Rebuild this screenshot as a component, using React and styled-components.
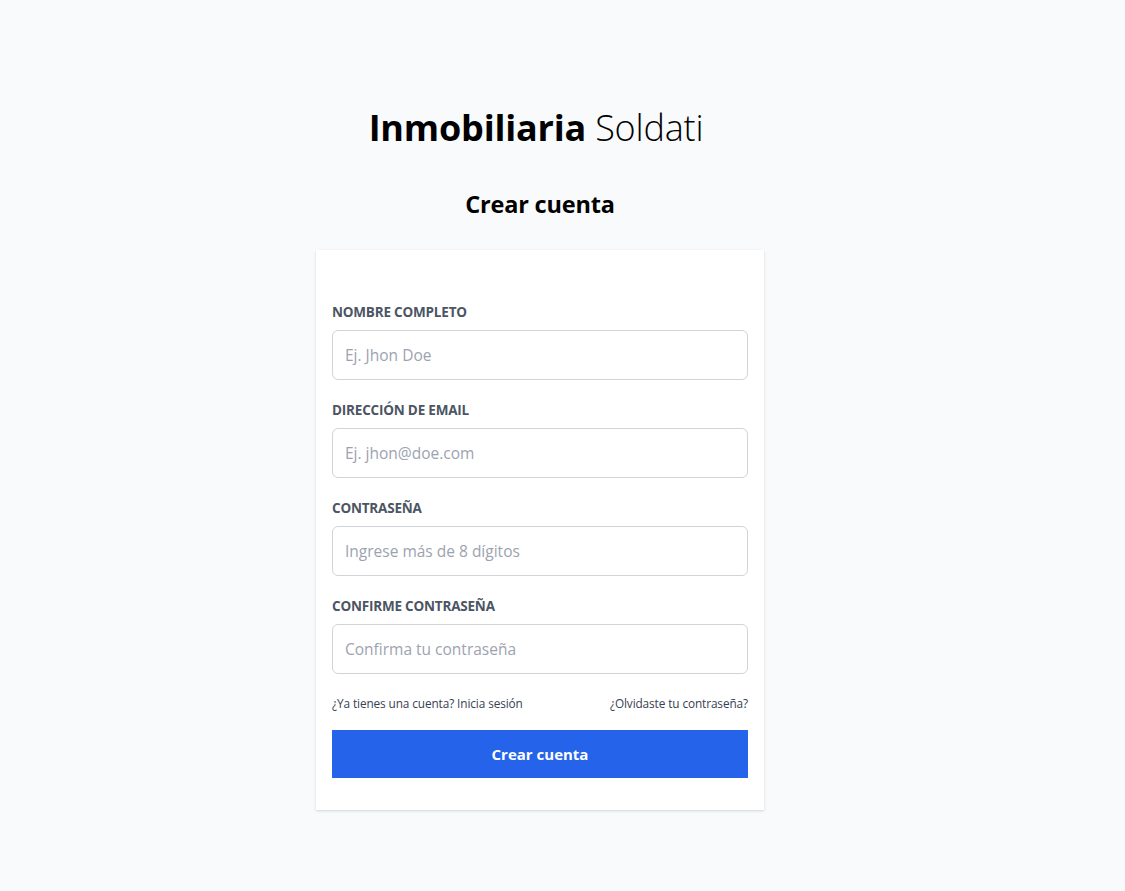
import React from 'react';
import styled, { createGlobalStyle } from 'styled-components';

const GlobalStyle = createGlobalStyle`
    body {
        margin: 0;
        background: #f9fafb;
        font-family: "Open Sans", "Noto Sans", sans-serif;
    }
`;

const Page = styled.main`
    min-height: 891px;
    box-sizing: border-box;
    padding: 102px 45px 0 0;
    display: flex;
    flex-direction: column;
    align-items: center;
`;

const Brand = styled.h1`
    margin: 0;
    font-size: 36px;
    line-height: 52px;
    font-weight: 700;
    color: #000;
    letter-spacing: -0.2px;
    transform: translateX(-4px);

    span {
        font-weight: 300;
    }
`;

const Title = styled.h2`
    margin: 34px 0 0;
    font-size: 23.5px;
    line-height: 32px;
    font-weight: 700;
    color: #000;
    letter-spacing: -0.2px;
`;

const Card = styled.form`
    margin-top: 30px;
    width: 448px;
    box-sizing: border-box;
    background: #fff;
    padding: 52px 16px 32px;
    box-shadow: 0 1px 3px rgba(0, 0, 0, 0.1), 0 1px 2px rgba(0, 0, 0, 0.06);
    display: flex;
    flex-direction: column;
`;

const Field = styled.div`
    display: flex;
    flex-direction: column;
    gap: 8px;
    margin-bottom: 20px;
`;

const Label = styled.label`
    font-size: 13.5px;
    line-height: 20px;
    font-weight: 700;
    color: #4b5563;
    text-transform: uppercase;
    letter-spacing: -0.2px;
`;

const Input = styled.input`
    height: 50px;
    box-sizing: border-box;
    border: 1px solid #d1d5db;
    border-radius: 6px;
    padding: 0 12px;
    font-family: inherit;
    font-size: 15.5px;
    color: #111827;
    outline: none;

    &::placeholder {
        color: #9ca3af;
    }
`;

const Links = styled.div`
    display: flex;
    justify-content: space-between;
    margin-top: 1px;
    font-size: 11.8px;
    line-height: 16px;
    color: #374151;
    letter-spacing: -0.1px;

    a {
        color: inherit;
        text-decoration: none;
    }
`;

const Submit = styled.button`
    margin-top: 19px;
    height: 48px;
    border: none;
    background: #2563eb;
    color: #fff;
    font-family: inherit;
    font-size: 15px;
    font-weight: 700;
    cursor: pointer;
`;

const fields = [
    { label: 'Nombre completo', type: 'text', placeholder: 'Ej. Jhon Doe' },
    { label: 'Dirección de email', type: 'email', placeholder: 'Ej. jhon@doe.com' },
    { label: 'Contraseña', type: 'password', placeholder: 'Ingrese más de 8 dígitos' },
    { label: 'Confirme contraseña', type: 'password', placeholder: 'Confirma tu contraseña' },
];

const App = () => {
    return (
        <>
            <GlobalStyle />
            <Page>
                <Brand>Inmobiliaria <span>Soldati</span></Brand>
                <Title>Crear cuenta</Title>
                <Card onSubmit={e => e.preventDefault()}>
                    {fields.map(f => (
                        <Field key={f.label}>
                            <Label>{f.label}</Label>
                            <Input type={f.type} placeholder={f.placeholder} />
                        </Field>
                    ))}
                    <Links>
                        <a href="#">¿Ya tienes una cuenta? Inicia sesión</a>
                        <a href="#">¿Olvidaste tu contraseña?</a>
                    </Links>
                    <Submit type="submit">Crear cuenta</Submit>
                </Card>
            </Page>
        </>
    );
};

export default App;
